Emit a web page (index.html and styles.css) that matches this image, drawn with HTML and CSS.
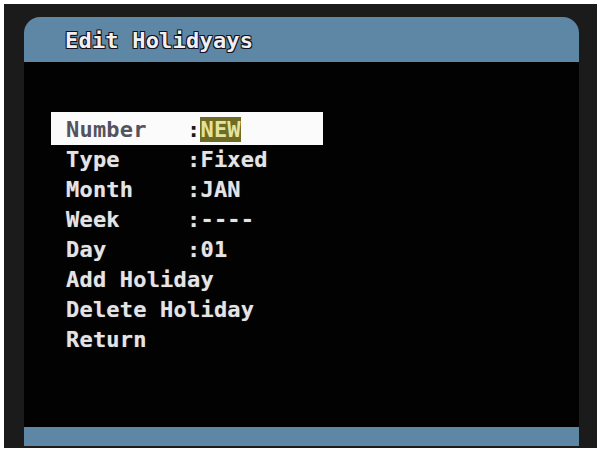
FILE: index.html
```html
<!DOCTYPE html>
<html>
<head>
<meta charset="utf-8">
<link rel="stylesheet" href="styles.css">
</head>
<body>
<div class="frame">
  <div class="screen">
    <div class="header"><span class="title">Edit Holidyays</span></div>
    <div class="body">
      <div class="menu">
        <div class="row sel"><span class="lbl">Number   </span><span class="colon">:</span><span class="val">NEW</span></div>
        <div class="row">Type     :Fixed</div>
        <div class="row">Month    :JAN</div>
        <div class="row">Week     :----</div>
        <div class="row">Day      :01</div>
        <div class="row">Add Holiday</div>
        <div class="row">Delete Holiday</div>
        <div class="row">Return</div>
      </div>
    </div>
    <div class="footer"></div>
  </div>
</div>
</body>
</html>
```
FILE: styles.css
```css
html, body {
  margin: 0;
  padding: 0;
  background: #ffffff;
}
.frame {
  margin: 4px 3px 2px 4px;
  width: 593px;
  height: 444px;
  box-sizing: border-box;
  background: #1b1b1b;
  padding: 13px 18px 2px 20px;
}
.screen {
  height: 100%;
  display: flex;
  flex-direction: column;
}
.header {
  height: 45px;
  background: #5e86a5;
  border-radius: 16px 16px 0 0;
  display: flex;
  align-items: center;
  padding-left: 41px;
  padding-top: 2px;
  box-sizing: border-box;
}
.title {
  font-family: "DejaVu Sans Mono", monospace;
  font-weight: bold;
  font-size: 22px;
  letter-spacing: 0.2px;
  color: #f0f0f4;
  text-shadow: 1px 1px 0 #101020, -1px -1px 0 #101020, 1px -1px 0 #101020, -1px 1px 0 #101020;
}
.body {
  flex: 1;
  background: #020202;
  padding: 53px 0 0 27px;
}
.menu {
  width: 272px;
  display: flex;
  flex-direction: column;
}
.row {
  height: 30px;
  line-height: 30px;
  padding-left: 15px;
  white-space: pre;
  font-family: "DejaVu Sans Mono", monospace;
  font-weight: bold;
  font-size: 22px;
  letter-spacing: 0.2px;
  color: #e4e4e6;
  text-shadow: 0 0 1px rgba(255,255,255,0.4);
}
.row.sel {
  background: #fbfbfb;
  margin: -3px 0 0;
  padding-top: 3px;
  color: #55535f;
  text-shadow: none;
}
.sel .colon {
  color: #1a1a1a;
}
.sel .val {
  background: #6e6c22;
  color: #e4e2a0;
}
.footer {
  height: 19px;
  background: #5e86a5;
}
```
